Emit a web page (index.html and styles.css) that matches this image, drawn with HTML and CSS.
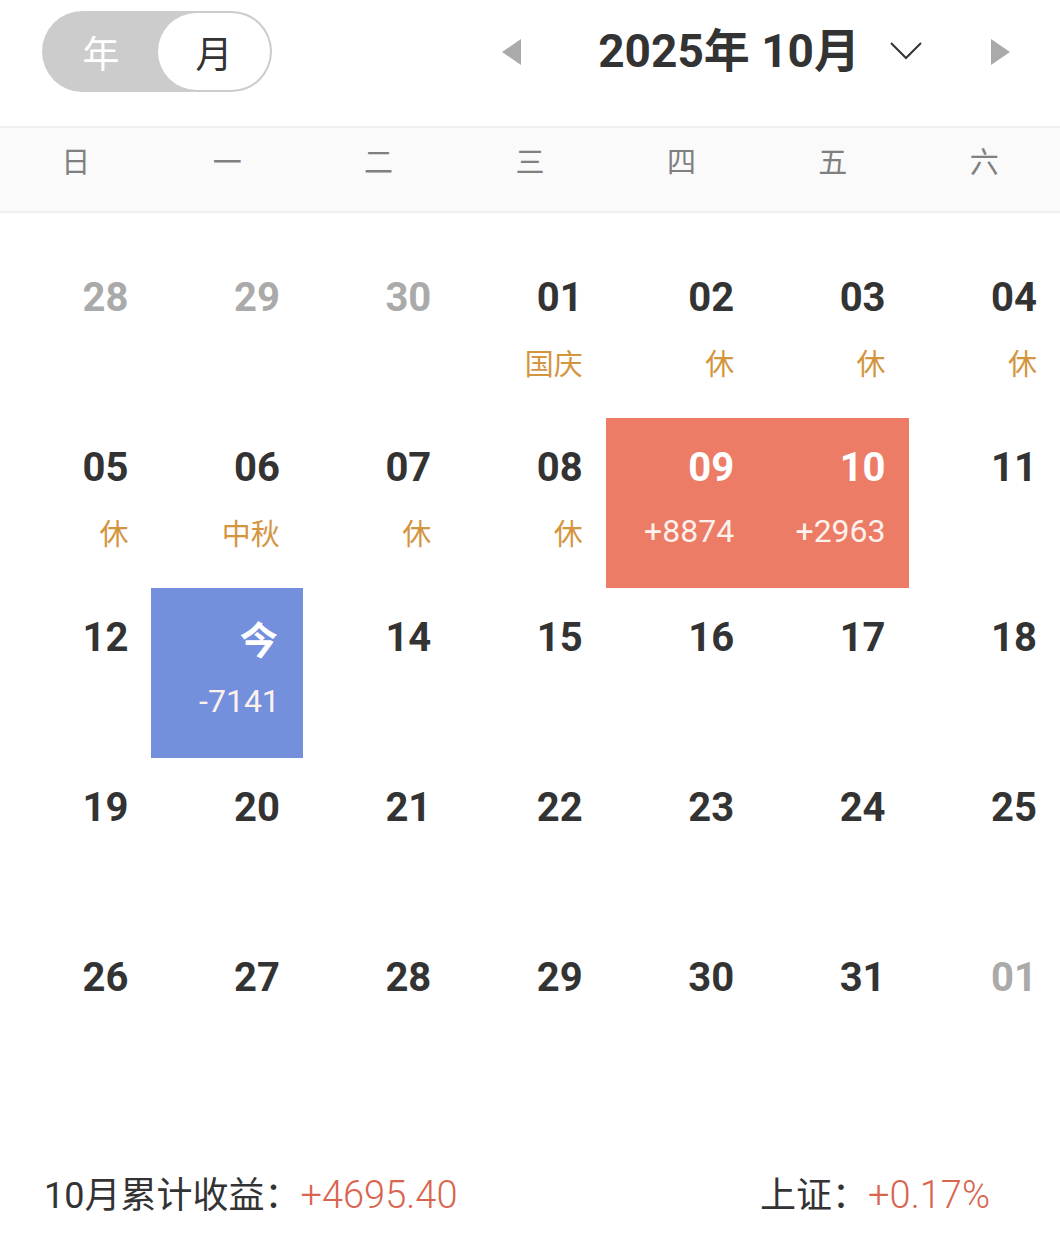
FILE: index.html
```html
<!DOCTYPE html>
<html lang="zh-CN">
<head>
<meta charset="utf-8">
<title>收益日历</title>
<link rel="stylesheet" href="styles.css">
</head>
<body>
<div class="page">
  <header class="top">
    <div class="toggle">
      <span class="seg seg-off">年</span>
      <span class="seg seg-on">月</span>
    </div>
    <nav class="nav">
      <svg class="arrow arrow-left" width="19" height="26" viewBox="0 0 19 26"><polygon points="19,0 19,26 0,13" fill="#aaaaaa"/></svg>
      <span class="title">2025年 10月</span>
      <svg class="chevron" width="32" height="18" viewBox="0 0 32 18"><polyline points="1,1 16,16 31,1" fill="none" stroke="#333" stroke-width="2"/></svg>
      <svg class="arrow arrow-right" width="19" height="26" viewBox="0 0 19 26"><polygon points="0,0 19,13 0,26" fill="#aaaaaa"/></svg>
    </nav>
  </header>

  <div class="weekdays">
    <span>日</span><span>一</span><span>二</span><span>三</span><span>四</span><span>五</span><span>六</span>
  </div>

  <div class="grid">
    <div class="cell muted"><span class="d">28</span></div>
    <div class="cell muted"><span class="d">29</span></div>
    <div class="cell muted"><span class="d">30</span></div>
    <div class="cell"><span class="d">01</span><span class="tag">国庆</span></div>
    <div class="cell"><span class="d">02</span><span class="tag">休</span></div>
    <div class="cell"><span class="d">03</span><span class="tag">休</span></div>
    <div class="cell"><span class="d">04</span><span class="tag">休</span></div>

    <div class="cell"><span class="d">05</span><span class="tag">休</span></div>
    <div class="cell"><span class="d">06</span><span class="tag">中秋</span></div>
    <div class="cell"><span class="d">07</span><span class="tag">休</span></div>
    <div class="cell"><span class="d">08</span><span class="tag">休</span></div>
    <div class="cell gain"><span class="d">09</span><span class="val">+8874</span></div>
    <div class="cell gain"><span class="d">10</span><span class="val">+2963</span></div>
    <div class="cell"><span class="d">11</span></div>

    <div class="cell"><span class="d">12</span></div>
    <div class="cell loss"><span class="d today">今</span><span class="val">-7141</span></div>
    <div class="cell"><span class="d">14</span></div>
    <div class="cell"><span class="d">15</span></div>
    <div class="cell"><span class="d">16</span></div>
    <div class="cell"><span class="d">17</span></div>
    <div class="cell"><span class="d">18</span></div>

    <div class="cell"><span class="d">19</span></div>
    <div class="cell"><span class="d">20</span></div>
    <div class="cell"><span class="d">21</span></div>
    <div class="cell"><span class="d">22</span></div>
    <div class="cell"><span class="d">23</span></div>
    <div class="cell"><span class="d">24</span></div>
    <div class="cell"><span class="d">25</span></div>

    <div class="cell"><span class="d">26</span></div>
    <div class="cell"><span class="d">27</span></div>
    <div class="cell"><span class="d">28</span></div>
    <div class="cell"><span class="d">29</span></div>
    <div class="cell"><span class="d">30</span></div>
    <div class="cell"><span class="d">31</span></div>
    <div class="cell muted"><span class="d">01</span></div>
  </div>

  <footer class="summary">
    <div class="sum-item">10月累计收益：<span class="up">+4695.40</span></div>
    <div class="sum-item">上证：<span class="up">+0.17%</span></div>
  </footer>
</div>
</body>
</html>
```

FILE: styles.css
```css
* { box-sizing: border-box; }

html, body {
  margin: 0;
  padding: 0;
  background: #ffffff;
}

body {
  font-family: Roboto, "Noto Sans CJK SC", sans-serif;
  color: #333333;
}

.page {
  width: 1060px;
  height: 1242px;
  overflow: hidden;
}

/* ---------- header ---------- */
.top {
  height: 126px;
  display: flex;
  align-items: center;
  padding: 11px 50px 34px 42px;
}

.toggle {
  width: 230px;
  height: 81px;
  border-radius: 41px;
  background: #cccccc;
  display: flex;
  align-items: stretch;
  padding: 2px;
}

.seg {
  display: flex;
  align-items: center;
  justify-content: center;
  font-family: "Noto Sans CJK SC", sans-serif;
  font-size: 37px;
  font-weight: 400;
}

.seg-off {
  width: 114px;
  color: #ffffff;
}

.seg-on {
  flex: 1;
  background: #ffffff;
  border-radius: 39px;
  color: #333333;
}

.nav {
  margin-left: auto;
  display: flex;
  align-items: center;
}

.arrow { display: block; }

.title {
  margin-left: 77px;
  font-family: Roboto, "Noto Sans CJK SC", sans-serif;
  font-weight: 700;
  font-size: 46px;
  line-height: 50px;
  color: #333333;
  white-space: pre;
  margin-top: -2px;
}

.chevron {
  display: block;
  margin-left: 30px;
  margin-bottom: 2px;
}

.arrow-right {
  margin-left: 69px;
}

/* ---------- weekday header ---------- */
.weekdays {
  height: 87px;
  background: #fafafa;
  border-top: 2px solid #f0f0f0;
  border-bottom: 2px solid #f0f0f0;
  display: grid;
  grid-template-columns: repeat(7, 1fr);
  align-items: center;
}

.weekdays span {
  text-align: center;
  font-family: "Noto Sans CJK SC", sans-serif;
  font-weight: 400;
  font-size: 29px;
  color: #808080;
  margin-top: -20px;
}

/* ---------- grid ---------- */
.grid {
  padding-top: 35px;
  display: grid;
  grid-template-columns: repeat(7, 1fr);
  grid-auto-rows: 170px;
}

.cell {
  display: flex;
  flex-direction: column;
  align-items: flex-end;
  padding: 30px 23px 0 0;
}

.d {
  font-family: Roboto, "Noto Sans CJK SC", sans-serif;
  font-weight: 700;
  font-size: 40px;
  line-height: 40px;
  color: #333333;
}

.muted .d { color: #aaaaaa; }

.tag {
  margin-top: 29px;
  font-family: "Noto Sans CJK SC", sans-serif;
  font-size: 29px;
  line-height: 30px;
  color: #d4953f;
}

.val {
  margin-top: 27px;
  font-family: Roboto, sans-serif;
  font-weight: 400;
  font-size: 32px;
  line-height: 32px;
  color: #fdf1ec;
}

.gain { background: #ec7c66; }
.loss { background: #7490dc; }

.gain .d, .loss .d { color: #ffffff; }

.today {
  font-family: "Noto Sans CJK SC", sans-serif;
  font-weight: 700;
  font-size: 38px;
  margin-right: 2px;
}

/* ---------- footer ---------- */
.summary {
  display: flex;
  justify-content: space-between;
  padding: 75px 70px 0 44px;
}

.sum-item {
  font-family: Roboto, "Noto Sans CJK SC", sans-serif;
  font-weight: 400;
  font-size: 36px;
  line-height: 44px;
  color: #333333;
}

.up {
  color: #d9654f;
  font-size: 38px;
  font-weight: 300;
}
```
